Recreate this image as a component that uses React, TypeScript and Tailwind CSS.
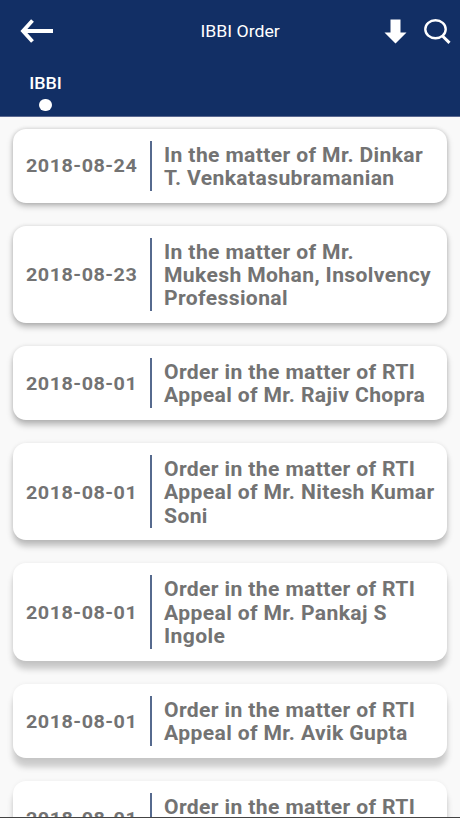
import { ReactNode } from "react";

type Order = {
  date: string;
  lines: string[];
  shadow: string;
};

// the lower a card sits in the list, the longer its shadow falls
const orders: Order[] = [
  {
    date: "2018-08-24",
    lines: ["In the matter of Mr. Dinkar", "T. Venkatasubramanian"],
    shadow: "shadow-[0_3px_6px_rgba(0,0,0,0.26),0_0_4px_rgba(0,0,0,0.14)]",
  },
  {
    date: "2018-08-23",
    lines: ["In the matter of Mr.", "Mukesh Mohan, Insolvency", "Professional"],
    shadow: "shadow-[0_4px_6px_rgba(0,0,0,0.27),0_0_4px_rgba(0,0,0,0.12)]",
  },
  {
    date: "2018-08-01",
    lines: ["Order in the matter of RTI", "Appeal of Mr. Rajiv Chopra"],
    shadow: "shadow-[0_5px_6px_rgba(0,0,0,0.26),0_0_4px_rgba(0,0,0,0.1)]",
  },
  {
    date: "2018-08-01",
    lines: ["Order in the matter of RTI", "Appeal of Mr. Nitesh Kumar", "Soni"],
    shadow: "shadow-[0_6px_6px_rgba(0,0,0,0.24),0_0_4px_rgba(0,0,0,0.08)]",
  },
  {
    date: "2018-08-01",
    lines: ["Order in the matter of RTI", "Appeal of Mr. Pankaj S", "Ingole"],
    shadow: "shadow-[0_8px_6px_rgba(0,0,0,0.2),0_0_4px_rgba(0,0,0,0.06)]",
  },
  {
    date: "2018-08-01",
    lines: ["Order in the matter of RTI", "Appeal of Mr. Avik Gupta"],
    shadow: "shadow-[0_9px_6px_rgba(0,0,0,0.19),0_0_4px_rgba(0,0,0,0.05)]",
  },
  {
    date: "2018-08-01",
    lines: ["Order in the matter of RTI", "Appeal of Mr. Rajiv"],
    shadow: "shadow-[0_9px_6px_rgba(0,0,0,0.19),0_0_4px_rgba(0,0,0,0.05)]",
  },
];

const IconButton = ({ label, children }: { label: string; children: ReactNode }) => (
  <button type="button" aria-label={label} className="block">
    {children}
  </button>
);

const Header = () => {
  return (
    <header className="h-[117px] shrink-0 border-b border-[#5a6890] bg-[#122f65] text-white">
      <div className="grid h-[62px] grid-cols-[1fr_auto_1fr] items-center pl-5 pr-[9px]">
        <IconButton label="Back">
          <svg width="34" height="26" viewBox="0 0 34 26" fill="none" stroke="currentColor" strokeWidth="3.8">
            <path d="M33 13H3M12.5 2.5L3 13l9.500 10.500" />
          </svg>
        </IconButton>
        <h1 className="ml-[9px] scale-x-[1.04] text-[17px] leading-none">IBBI Order</h1>
        <div className="flex items-center justify-end gap-[17px]">
          <IconButton label="Download">
            <svg width="23" height="25" viewBox="0 0 23 25" fill="currentColor">
              <path d="M6.500 0.500h10v13H22.500L11.500 24.500 0.500 13.500h6z" />
            </svg>
          </IconButton>
          <IconButton label="Search">
            <svg width="27" height="25" viewBox="0 0 27 25" fill="none" stroke="currentColor" strokeWidth="2.4">
              <ellipse cx="11.500" cy="10.200" rx="10.200" ry="9" />
              <path d="M18.500 17l7 6.800" strokeWidth="3" />
            </svg>
          </IconButton>
        </div>
      </div>
      <nav className="flex">
        <div className="ml-[30px] mt-[12px] flex flex-col items-center gap-[7px]">
          <span className="scale-x-[1.05] text-[17px] font-medium leading-[18px]">IBBI</span>
          <span className="h-[12px] w-[13px] rounded-full bg-white" />
        </div>
      </nav>
    </header>
  );
};

const OrderCard = ({ order }: { order: Order }) => {
  return (
    <li className={`flex shrink-0 items-stretch rounded-[13px] bg-white py-[12px] pl-[13px] ${order.shadow}`}>
      <div className="flex w-[124px] items-center whitespace-nowrap pt-[1px] text-[19px] tracking-[0.480px]">
        <span className="origin-left scale-x-[1.04]">{order.date}</span>
      </div>
      <span className="w-[2px] bg-[#566a8e]" />
      <p className="origin-left scale-x-[1.055] pl-[11.400px] pt-[3.200px] pb-[0.500px] tracking-[0.350px]">
        {order.lines.map((line) => (
          <span key={line} className="block whitespace-nowrap">
            {line}
          </span>
        ))}
      </p>
    </li>
  );
};

function App() {
  return (
    <div className="flex h-[818px] w-[460px] flex-col overflow-hidden border-b border-[#444] bg-[#f9f9f9] font-[Roboto,sans-serif]">
      <Header />
      <ul className="flex min-h-0 flex-1 flex-col gap-[23px] overflow-hidden px-[13px] pt-[11.500px] text-[20px] font-bold leading-[23.200px] text-[#737373]">
        {orders.map((order, i) => (
          <OrderCard key={i} order={order} />
        ))}
      </ul>
    </div>
  );
}

export default App;
